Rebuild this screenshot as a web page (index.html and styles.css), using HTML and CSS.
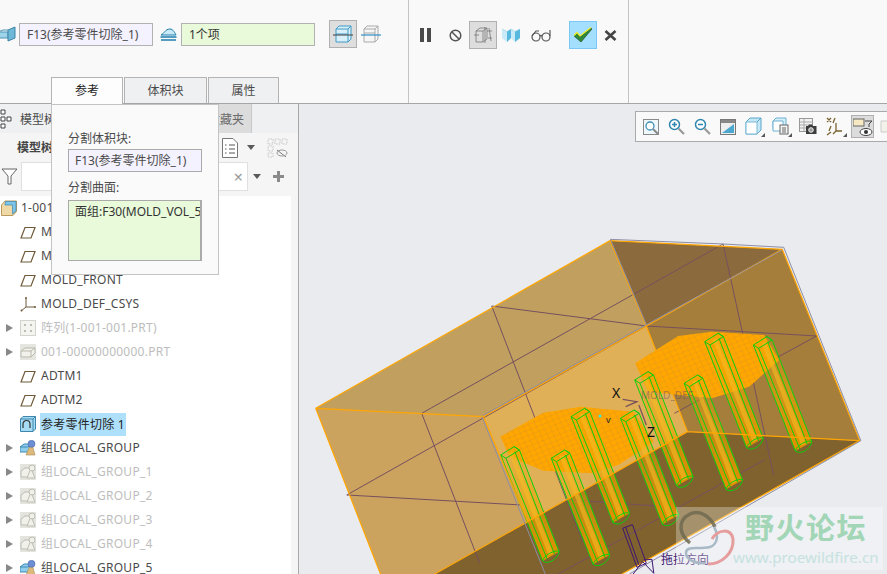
FILE: index.html
```html
<!DOCTYPE html>
<html lang="zh">
<head>
<meta charset="utf-8">
<title>Creo</title>
<link rel="stylesheet" href="styles.css">
</head>
<body>
<svg class="defs" width="0" height="0">
  <defs>
    <symbol id="i-plane" viewBox="0 0 16 16"><path d="M1 14 5 3.500H15L11 14Z" fill="none" stroke="#6f5a38" stroke-width="1.200"/></symbol>
    <symbol id="i-csys" viewBox="0 0 16 16"><path d="M6 2V11L1 15M6 11H15" fill="none" stroke="#6f5a38"/><circle cx="6" cy="2" r="1" fill="#6f5a38"/><circle cx="15" cy="11" r="1" fill="#6f5a38"/><circle cx="1.500" cy="14.500" r="1" fill="#6f5a38"/></symbol>
    <symbol id="i-pattern" viewBox="0 0 16 16"><rect width="16" height="16" fill="#e8e8e2"/><rect x=".5" y=".5" width="15" height="15" fill="#f4f4f0" stroke="#d4d4cc"/><path d="M4 4h2v2H4zM10 4h2v2h-2zM4 10h2v2H4zM10 10h2v2h-2z" fill="#bcbcb0"/></symbol>
    <symbol id="i-part" viewBox="0 0 16 16"><rect width="16" height="16" fill="#e6e6e0"/><path d="M1 7 5 4H15V9L11 13H1Z" fill="#f2f2ec" stroke="#b9b9ac"/><path d="M1 7H11L15 4M11 7V13" fill="none" stroke="#b9b9ac"/></symbol>
    <symbol id="i-group" viewBox="0 0 16 16"><path d="M0 7 4 4H12V12H0Z" fill="#8fcdec" stroke="#3f8ab4"/><path d="M0 7H8L12 4" fill="none" stroke="#3f8ab4"/><path d="M9 8 12 4 15 15H6Z" fill="#ddb97c" stroke="#a98a52" stroke-width=".6"/><circle cx="11.500" cy="3.800" r="3.500" fill="#6c8fd4" stroke="#3a5aa0" stroke-width=".5"/></symbol>
    <symbol id="i-groupoff" viewBox="0 0 16 16"><rect width="16" height="16" fill="#e4e4de"/><path d="M1 7 5 4H12V13H1Z" fill="#f1f1ec" stroke="#bdbdb2"/><path d="M7 14 11 4 15 14Z" fill="#f1f1ec" stroke="#bdbdb2"/><circle cx="12" cy="4" r="3" fill="#f1f1ec" stroke="#bdbdb2"/></symbol>
    <symbol id="i-cut" viewBox="0 0 16 16"><path d="M.500 3 3 .500H15.500V13L13 15.500H.500Z" fill="#a6dbf3" stroke="#3c86ad"/><path d="M13 15.500V3H.500M13 3 15.500.500" fill="none" stroke="#3c86ad"/><path d="M3 12V8A3.500 3.500 0 0 1 10 8V12" fill="none" stroke="#333" stroke-width="1.200"/></symbol>
    <symbol id="i-root" viewBox="0 0 16 16"><path d="M.500 5 4 1H15.500V11.500L12 15.500H.500Z" fill="#efd9a6" stroke="#b79a5c"/><path d="M4.500 1.500H15V11L11.500 14V5H4Z" fill="#7cc4ea" stroke="#3c86ad" stroke-width=".7"/></symbol>
    <linearGradient id="legfill" x1="0" y1="0" x2="0" y2="1">
      <stop offset="0" stop-color="#eba500" stop-opacity=".15"/>
      <stop offset=".45" stop-color="#eba500" stop-opacity=".55"/>
      <stop offset="1" stop-color="#e48f00" stop-opacity="1"/>
    </linearGradient>
    <pattern id="wire" width="16" height="15" patternUnits="userSpaceOnUse" patternTransform="rotate(-24)">
      <rect width="16" height="15" fill="#ffa600"/>
      <path d="M0 0H16M0 0V15" stroke="#cf8f2a" stroke-width="1.600" fill="none"/>
    </pattern>
    <g id="leg">
      <path class="leg-body" d="M-24 10 12-15 26-5 132 300 88 328Z"/>
      <path class="leg-core" d="M-2 4 8 0 116 305 104 312Z"/>
      <path class="leg-line" d="M-24 10 12-15 26-5-10 20ZM-24 10 88 328M-10 20 100 322M12-15 26-5M26-5 132 300M14 0 120 308"/>
      <path class="leg-line" d="M88 328C100 340 128 325 132 300M88 328C90 312 122 292 132 300"/>
    </g>
  </defs>
</svg>

<header class="ribbon">
  <section class="ribbon-main">
    <div class="ribbon-row">
      <svg class="ic-block" width="16" height="16" viewBox="0 0 16 16"><path d="M-2 6H8V12H-2Z" fill="#9ed4ea" stroke="#4c93b5"/><path d="M8 4 15 1V12L8 15Z" fill="#6fb8d8" stroke="#3d83a5"/><path d="M-2 6 3 4H8" fill="none" stroke="#4c93b5"/></svg>
      <div class="field field-ref">F13(参考零件切除_1)</div>
      <svg class="ic-surf" width="17" height="14" viewBox="0 0 17 14"><path d="M1 8C4 7 5 2 10 2 13 2 15 6 16 8Z" fill="#c9e9f6" stroke="#1e7fae"/><path d="M0.500 10H16.500M1 13H16" stroke="#1e7fae" stroke-width="1.300"/></svg>
      <div class="field field-sel">1个项</div>
      <button class="tool tool-on tool-a" type="button">
        <svg width="22" height="18" viewBox="0 0 22 18"><path d="M4 4 7 1H19V14L16 17H4Z" fill="#d9f0fa" stroke="#3e9ac6"/><path d="M4 4H16V17M16 4 19 1M4 9H16" fill="none" stroke="#3e9ac6"/><path d="M1 10H21" stroke="#555" stroke-width="1.200"/></svg>
      </button>
      <button class="tool tool-b" type="button">
        <svg width="22" height="18" viewBox="0 0 22 18"><path d="M4 4 7 1H18V14L15 17H4Z" fill="#f6f6f6" stroke="#aaa"/><path d="M4 4H15V17M15 4 18 1M4 8H15" fill="none" stroke="#aaa"/><path d="M1 10H21" stroke="#2e8fc4" stroke-width="1.200"/></svg>
      </button>
    </div>
    <nav class="tabs">
      <div class="tab tab-on">参考</div>
      <div class="tab tab-mid">体积块</div>
      <div class="tab tab-end">属性</div>
    </nav>
  </section>
  <section class="ribbon-actions">
    <div class="pause"><i></i><i></i></div>
    <svg class="ic-stop" width="13" height="13" viewBox="0 0 13 13"><circle cx="6.500" cy="6.500" r="5.300" fill="none" stroke="#555" stroke-width="1.500"/><path d="M3 3 10 10" stroke="#555" stroke-width="1.500"/></svg>
    <button class="tool tool-on tool-c" type="button">
      <svg width="20" height="18" viewBox="0 0 20 18"><path d="M3 5 7 2H14V13L10 16H3ZM3 5H10V16M10 5 14 2M1 9H6M12 1V17M16 2 18 15M14 5H19M15 12H19" fill="none" stroke="#777" stroke-width=".8"/></svg>
    </button>
    <svg class="ic-map" width="18" height="15" viewBox="0 0 18 15"><path d="M0 1 5 3.500 9 1 13 3.500 18 1V10L13 14 9 10 5 14 0 10Z" fill="#c9ebf8"/><path d="M5 3.500V14L9 10V1ZM13 3.500V14L18 10V1Z" fill="#58b8de"/><path d="M0 1 5 3.500 9 1 13 3.500 18 1" fill="none" stroke="#9ccfe2" stroke-width=".6"/></svg>
    <svg class="ic-glass" width="20" height="13" viewBox="0 0 20 13"><circle cx="5" cy="8" r="4" fill="none" stroke="#555" stroke-width="1.200"/><circle cx="15" cy="8" r="4" fill="none" stroke="#555" stroke-width="1.200"/><path d="M9 7Q10 6 11 7M1 7 5 2H8M19 7V1" fill="none" stroke="#555" stroke-width="1.200"/></svg>
    <button class="tool tool-ok" type="button">
      <svg width="22" height="18" viewBox="0 0 22 18"><path d="M2 10 5 7 8 11 19 2 20 3 9 16Z" fill="#2f8a3a" stroke="#173f1c" stroke-width=".6"/><path d="M2 9.500 5 6.500 8 10 19 1.500" fill="none" stroke="#f0f020" stroke-width="1.200"/></svg>
    </button>
    <svg class="ic-x" width="13" height="11" viewBox="0 0 13 11"><path d="M1.500 1 11.500 10M11.500 1 1.500 10" stroke="#444" stroke-width="2.600"/></svg>
  </section>
  <div class="ribbon-rest"></div>
</header>

<main class="body">
  <aside class="side">
    <div class="side-tabs">
      <div class="stab stab-tree">
        <svg width="12" height="24" viewBox="0 0 12 24"><path d="M1 3h4v4H1zM1 17h4v4H1zM7 10h4v4H7zM1 10h4v4H1z" fill="#fff" stroke="#444"/></svg>
        <span class="stab-label">模型树</span>
      </div>
      <div class="stab stab-fav"><span class="stab-label">收藏夹</span></div>
    </div>
    <div class="side-tools">
      <b class="side-title">模型树</b>
      <svg class="ic-list" width="16" height="20" viewBox="0 0 16 20"><path d="M.500.500H11L15.500 5V19.500H.500Z" fill="#fff" stroke="#777"/><path d="M3 7h1.500M3 11h1.500M3 15h1.500M7 7h6M7 11h6M7 15h6" stroke="#555"/></svg>
      <span class="caret caret-a"></span>
      <svg class="ic-hide" width="21" height="20" viewBox="0 0 21 20"><path d="M1 1h5v5H1zM8 1h5v5H8zM15 1h5v5h-5zM1 8h5v5H1zM1 15h5v4H1z" fill="none" stroke="#c6c6c6" stroke-dasharray="1.500 1"/><path d="M10 12 19 19" stroke="#777"/><ellipse cx="15" cy="15" rx="5" ry="3" fill="none" stroke="#999"/></svg>
    </div>
    <div class="side-filter">
      <svg class="ic-funnel" width="17" height="17" viewBox="0 0 17 17"><path d="M1 1H16L10 8V16H7V8Z" fill="#fff" stroke="#666"/></svg>
      <div class="filter-input"><span class="filter-x">×</span></div>
      <span class="caret caret-b"></span>
      <span class="plus"></span>
    </div>
    <ul class="tree">
      <li class="row row-root"><svg class="ti"><use href="#i-root"/></svg><span>1-001-001.ASM</span></li>
      <li class="row"><span class="arrow none"></span><svg class="ti"><use href="#i-plane"/></svg><span>MOLD_RIGHT</span></li>
      <li class="row"><span class="arrow none"></span><svg class="ti"><use href="#i-plane"/></svg><span>MAIN_PARTING</span></li>
      <li class="row"><span class="arrow none"></span><svg class="ti"><use href="#i-plane"/></svg><span>MOLD_FRONT</span></li>
      <li class="row"><span class="arrow none"></span><svg class="ti"><use href="#i-csys"/></svg><span>MOLD_DEF_CSYS</span></li>
      <li class="row off"><span class="arrow"></span><svg class="ti"><use href="#i-pattern"/></svg><span>阵列(1-001-001.PRT)</span></li>
      <li class="row off"><span class="arrow"></span><svg class="ti"><use href="#i-part"/></svg><span>001-00000000000.PRT</span></li>
      <li class="row"><span class="arrow none"></span><svg class="ti"><use href="#i-plane"/></svg><span>ADTM1</span></li>
      <li class="row"><span class="arrow none"></span><svg class="ti"><use href="#i-plane"/></svg><span>ADTM2</span></li>
      <li class="row"><span class="arrow none"></span><svg class="ti"><use href="#i-cut"/></svg><span class="sel">参考零件切除 1</span></li>
      <li class="row"><span class="arrow"></span><svg class="ti"><use href="#i-group"/></svg><span>组LOCAL_GROUP</span></li>
      <li class="row off"><span class="arrow"></span><svg class="ti"><use href="#i-groupoff"/></svg><span>组LOCAL_GROUP_1</span></li>
      <li class="row off"><span class="arrow"></span><svg class="ti"><use href="#i-groupoff"/></svg><span>组LOCAL_GROUP_2</span></li>
      <li class="row off"><span class="arrow"></span><svg class="ti"><use href="#i-groupoff"/></svg><span>组LOCAL_GROUP_3</span></li>
      <li class="row off"><span class="arrow"></span><svg class="ti"><use href="#i-groupoff"/></svg><span>组LOCAL_GROUP_4</span></li>
      <li class="row"><span class="arrow"></span><svg class="ti"><use href="#i-group"/></svg><span>组LOCAL_GROUP_5</span></li>
    </ul>
  </aside>

  <section class="canvas">
    <svg class="scene" viewBox="299 104 588 470" width="588" height="470">
      <g transform="translate(300 230) scale(.3744 .3333)">
        <path fill="#c1a05f" d="M42 535 828 32 925 288 490 560Z"/>
        <path fill="#cba35f" d="M42 535 490 560 608 875 360 1032H215Z"/>
        <path fill="#8b6b3d" d="M828 32 1288 58 925 288Z"/>
        <path fill="#a57e3c" d="M1288 58 1495 632 1035 605 925 288Z"/>
        <path fill="#e0b058" d="M490 560 925 288 1035 605 608 875Z"/>
        <path fill="#80622f" d="M608 875 1035 605 1495 632 860 1032H360Z"/>

        <path class="wf" d="M512 228 755 935M325 550 1130 42M125 795 925 288M325 550 480 1000M125 795 590 825M720 810 1005 832M1130 42 1265 735M1380 318 1000 550M1240 690 690 1032M512 228 925 288 1380 318"/>

        <path fill="url(#wire)" d="M535 620 650 548 750 530 890 545 945 635 850 705 780 730 650 722 560 680Z"/>
        <path fill="url(#wire)" d="M895 400 1010 318 1100 305 1240 315 1280 390 1200 470 1100 505 930 485Z"/>

        <use href="#leg" transform="translate(560 665)"/>
        <use href="#leg" transform="translate(695 675)"/>
        <use href="#leg" transform="translate(748 550)"/>
        <use href="#leg" transform="translate(880 555)"/>
        <use href="#leg" transform="translate(918 440)"/>
        <use href="#leg" transform="translate(1050 450)"/>
        <use href="#leg" transform="translate(1105 325)"/>
        <use href="#leg" transform="translate(1235 335)"/>

        <path class="edge-or" d="M42 535 828 32 1288 58 1495 632 860 1032M42 535 490 560 925 288 1288 58M42 535 215 1032M828 32 925 288 1035 605 1495 632M490 560 608 875M1035 605 360 1032"/>
        <path class="edge-gr" d="M828 28 1130 42 1292 52 1498 632 880 1032M490 556 925 284 1288 60M486 560 655 1032M830 30 925 284"/>
        <path class="edge-pu" d="M862 895 888 884 925 1000 900 1012ZM870 892 905 1005M890 1032 915 995 945 1030M918 990 940 988 945 1030"/>
        <path class="axis" d="M862 508 900 515 870 530M905 525 925 585"/>
      </g>
      <text class="ax" x="612" y="398">X</text>
      <text class="ax" x="647" y="437">Z</text>
      <text class="ax-v" x="606" y="423">v</text>
      <text class="ax-m" x="641" y="399">MOLD_DEF</text>
      <circle cx="600" cy="416" r="1.500" fill="#33e6e6"/>
      <text class="pull" x="661" y="564">拖拉方向</text>
    </svg>

    <div class="view-bar">
      <svg width="16" height="16" viewBox="0 0 16 16"><rect x=".5" y=".5" width="15" height="15" fill="#eef7fb" stroke="#8a8a8a"/><circle cx="7" cy="7" r="4" fill="#fff" stroke="#3e8fb7" stroke-width="1.300"/><path d="M10 10 15 15" stroke="#888" stroke-width="2"/></svg>
      <svg width="17" height="17" viewBox="0 0 17 17"><circle cx="6.500" cy="6.500" r="5" fill="#fff" stroke="#2f86ae" stroke-width="1.500"/><path d="M4 6.500H9M6.500 4V9" stroke="#2f86ae" stroke-width="1.500"/><path d="M10.500 10.500 16 16" stroke="#999" stroke-width="2.200"/></svg>
      <svg width="17" height="17" viewBox="0 0 17 17"><circle cx="6.500" cy="6.500" r="5" fill="#fff" stroke="#2f86ae" stroke-width="1.500"/><path d="M4 6.500H9" stroke="#2f86ae" stroke-width="1.500"/><path d="M10.500 10.500 16 16" stroke="#999" stroke-width="2.200"/></svg>
      <svg width="16" height="16" viewBox="0 0 16 16"><rect x=".5" y=".5" width="15" height="15" fill="#eee" stroke="#777"/><rect x="1" y="1" width="14" height="3" fill="#888"/><path d="M2 14 14 5V14Z" fill="#4da8cf"/></svg>
      <svg class="vb-wide" width="20" height="20" viewBox="0 0 20 20"><path d="M1 5 5 1H16V13L12 17H1Z" fill="#c6e8f6" stroke="#5aa6ca"/><path d="M1 5H12V17H1Z" fill="#fff" stroke="#7ab8d6"/><path d="M12 5 16 1" stroke="#5aa6ca"/><path d="M20 16V20H16Z" fill="#555"/></svg>
      <svg class="vb-wide" width="20" height="20" viewBox="0 0 20 20"><path d="M1 4 4 1H14V12H1Z" fill="#d5eef9" stroke="#6cb1d2"/><path d="M1 4H11V14H1Z" fill="#fff" stroke="#6cb1d2"/><rect x="8" y="8" width="8" height="9" fill="#f4f4f4" stroke="#666"/><path d="M10 11h4M10 13h4M10 15h4" stroke="#666"/><path d="M20 16V20H16Z" fill="#555"/></svg>
      <svg width="18" height="17" viewBox="0 0 18 17"><rect x=".5" y=".5" width="13" height="13" fill="#f2f2f2" stroke="#999"/><path d="M1 4H13M1 7H13M1 10H13M5 1V13" stroke="#aaa"/><path d="M7 8H9L10 6.500H13L14 8H17.500V16H7Z" fill="#3c3c3c"/><circle cx="12" cy="12" r="2.300" fill="#999" stroke="#eee"/></svg>
      <svg class="vb-wide" width="21" height="20" viewBox="0 0 21 20"><path d="M1 1 5 5M5 1 1 5M9 1 7 6M5 9 3 14M1 18 5 15M10 6V14H16M10 14 7 17" fill="none" stroke="#7a6230" stroke-width="1.300"/><path d="M21 16V20H17Z" fill="#555"/></svg>
      <span class="view-on"><svg width="20" height="18" viewBox="0 0 20 18"><rect x="0" y="1" width="11" height="7" fill="#f6e9c4" stroke="#666"/><path d="M12 3H19L16 6V9" fill="none" stroke="#444"/><ellipse cx="13" cy="14" rx="6" ry="3.500" fill="#fff" stroke="#444"/><circle cx="13" cy="14" r="2" fill="#333"/></svg></span>
      <svg class="view-cut" width="8" height="17" viewBox="0 0 8 17"><path d="M1 3H8V14H1Z" fill="#f2f2ea" stroke="#ccc"/></svg>
    </div>

    <div class="mark">
      <svg class="mark-logo" width="62" height="62" viewBox="0 0 62 62">
        <path d="M14 36C4 28 0 14 14 7 25 2 35 11 39 20" fill="none" stroke="#6f6a50" stroke-width="3.500" opacity=".85"/>
        <path d="M38 20C44 30 40 38 34 40 22 43 10 38 10 46 10 53 20 57 30 56" fill="none" stroke="#a9bac6" stroke-width="2.500"/>
        <path d="M36 32C42 22 55 21 57 32 58 46 46 57 32 57" fill="none" stroke="#e59d9d" stroke-width="3"/>
      </svg>
      <div class="mark-title">野火论坛</div>
      <div class="mark-url">www.proewildfire.cn</div>
    </div>
  </section>

  <div class="popup">
    <label class="pop-label">分割体积块:</label>
    <div class="pop-field">F13(参考零件切除_1)</div>
    <label class="pop-label pop-label-2">分割曲面:</label>
    <div class="pop-list">面组:F30(MOLD_VOL_5)</div>
  </div>
</main>
</body>
</html>
```

FILE: styles.css
```css
* { box-sizing: border-box; }
html, body { margin: 0; padding: 0; }
body {
  width: 887px;
  height: 574px;
  overflow: hidden;
  background: #e9ebef;
  color: #4a4a4a;
  font: 12px/16px "Noto Sans", "Noto Sans CJK SC", sans-serif;
}
.defs { position: absolute; }
button { padding: 0; margin: 0; font: inherit; background: none; border: 1px solid transparent; }

/* ribbon */
.ribbon {
  display: flex;
  height: 104px;
  background: #f9f9f9;
  border-bottom: 1px solid #a6a6a6;
}
.ribbon-main {
  width: 409px;
  flex: none;
  display: flex;
  flex-direction: column;
  justify-content: space-between;
  border-right: 1px solid #c4c4c4;
}
.ribbon-row {
  display: flex;
  align-items: center;
  height: 28px;
  margin-top: 20px;
}
.ic-block { margin: 0 3px 0 0; flex: none; }
.field {
  height: 23px;
  width: 134px;
  padding-left: 7px;
  line-height: 21px;
  border: 1px solid #b2b2b2;
  white-space: nowrap;
  overflow: hidden;
}
.field-ref { background: #f4f2fe; }
.field-sel { background: #e9fadb; color: #333; margin-left: 4px; }
.ic-surf { margin-left: 7px; flex: none; }
.tool { display: flex; align-items: center; justify-content: center; flex: none; width: 28px; height: 28px; }
.tool-on { background: #dedede; border-color: #b0b0b0; }
.tool-a { margin-left: 14px; }
.tool-b { margin-left: 0; }
.tabs { display: flex; padding-left: 51px; height: 26px; }
.tab {
  height: 26px;
  text-align: center;
  line-height: 25px;
  background: #eff0f2;
  border: 1px solid #b4b4b4;
  border-bottom: 0;
  margin-right: 1px;
}
.tab-on { width: 72px; background: #fdfdfd; color: #222; position: relative; z-index: 3; height: 27px; }
.tab-mid { width: 83px; }
.tab-end { width: 71px; }

.ribbon-actions {
  width: 220px;
  flex: none;
  display: flex;
  align-items: center;
  align-self: flex-start;
  height: 103px;
  padding: 21px 0 54px 11px;
  border-right: 1px solid #c4c4c4;
}
.pause { display: flex; gap: 3px; flex: none; }
.pause i { display: block; width: 4px; height: 14px; background: #4a4a4a; }
.ic-stop { margin-left: 18px; flex: none; }
.tool-c { margin-left: 7px; }
.ic-map { margin-left: 5px; flex: none; }
.ic-glass { margin-left: 11px; flex: none; }
.tool-ok { margin-left: 18px; background: #a5dfff; border-color: #7cc8f5; }
.ic-x { margin-left: 7px; flex: none; }
.ribbon-rest { flex: 1; }

/* main */
.body { display: flex; position: relative; height: 470px; }
.side {
  width: 299px;
  flex: none;
  display: flex;
  flex-direction: column;
  background: #f5f5f6;
  border-right: 1px solid #a8a8a8;
  overflow: hidden;
}
.side-tabs { display: flex; height: 29px; flex: none; background: #eff0f2; }
.stab { height: 29px; display: flex; align-items: center; }
.stab-label { padding-top: 2px; }
.stab-tree { width: 190px; gap: 8px; white-space: nowrap; }
.stab-fav {
  width: 62px;
  padding-left: 18px;
  background: #dcdcdc;
  border-right: 1px solid #c8c8c8;
  color: #6a6a6a;
  white-space: nowrap;
}
.side-tools { display: flex; align-items: center; height: 29px; flex: none; padding-left: 17px; }
.side-title { width: 205px; color: #444; font-weight: 700; }
.caret { display: block; flex: none; width: 0; height: 0; border: 4px solid transparent; border-top: 5px solid #5a5a5a; border-bottom: 0; }
.caret-a { margin-left: 9px; }
.ic-hide { margin-left: 12px; }
.side-filter { display: flex; align-items: center; height: 29px; flex: none; padding-left: 1px; }
.ic-funnel { flex: none; }
.filter-input {
  width: 227px;
  height: 29px;
  margin-left: 3px;
  background: #fff;
  border: 1px solid #e0e0e0;
  display: flex;
  align-items: center;
  justify-content: flex-end;
  padding-right: 4px;
}
.filter-x { color: #999; font-size: 16px; }
.caret-b { margin-left: 5px; }
.plus {
  display: block;
  width: 11px;
  height: 11px;
  margin-left: 12px;
  background:
    linear-gradient(#8a8a8a, #8a8a8a) center / 11px 3px no-repeat,
    linear-gradient(#8a8a8a, #8a8a8a) center / 3px 11px no-repeat;
}
.tree {
  list-style: none;
  margin: 5px 7px 0 0;
  padding: 0;
  background: #fff;
  flex: 1;
  overflow: hidden;
  letter-spacing: .25px;
}
.row {
  display: flex;
  align-items: center;
  height: 24px;
  padding-left: 6px;
  white-space: nowrap;
}
.row-root { padding-left: 1px; }
.row-root .ti { margin-right: 3px; }
.row.off { color: #bdbdbd; }
.arrow {
  flex: none;
  width: 0;
  height: 0;
  margin-right: 7px;
  border-style: solid;
  border-width: 4.500px 0 4.500px 7px;
  border-color: transparent transparent transparent #888;
}
.arrow.none { border-color: transparent; }
.ti { width: 16px; height: 16px; flex: none; margin-right: 4px; }
.row > span:last-child { padding: 0 1px; }
.sel { background: #aee0fb; color: #222; line-height: 23px; }

/* canvas */
.canvas { flex: 1; position: relative; overflow: hidden; background: #e9ebef; }
.scene { position: absolute; left: 0; top: 0; display: block; }
.wf, .edge-or, .edge-gr, .edge-pu, .axis { fill: none; vector-effect: non-scaling-stroke; }
.wf { stroke: #76505e; stroke-width: 1; }
.edge-or { stroke: #ffa500; stroke-width: 1.200; }
.edge-gr { stroke: #8d8ea6; stroke-width: 1; }
.edge-pu { stroke: #3d1670; stroke-width: 1; }
.axis { stroke: #76505e; stroke-width: 1.200; }
.leg-body { fill: url(#legfill); }
.leg-core { fill: #f5bd25; opacity: .6; }
.leg-line { fill: none; stroke: #0bcf0b; stroke-width: 1; vector-effect: non-scaling-stroke; }
.ax { font-size: 14px; fill: #111; }
.ax-v { font-size: 9px; fill: #222; }
.ax-m { font-size: 10px; fill: #76505e; opacity: .55; }
.pull { font-size: 12px; fill: #3d1670; }

.view-bar {
  position: absolute;
  left: 336px;
  top: 7px;
  width: 260px;
  height: 31px;
  display: flex;
  align-items: center;
  gap: 9px;
  padding-left: 7px;
  background: #f9f9f9;
  border: 1px solid #aaa;
  overflow: hidden;
}
.view-bar svg { flex: none; }
.vb-wide { margin-right: -2px; }
.view-on {
  flex: none;
  display: flex;
  align-items: center;
  justify-content: center;
  width: 23px;
  height: 23px;
  margin-left: -3px;
  margin-right: -3px;
  background: #dcdcdc;
  border: 1px solid #b0b0b0;
}

.mark {
  position: absolute;
  left: 377px;
  top: 403px;
  width: 207px;
  height: 63px;
  background: rgba(255, 255, 255, .3);
}
.mark-logo { position: absolute; left: 0; top: 0; }
.mark-title {
  position: absolute;
  left: 69px;
  top: 2px;
  font: 700 29px/34px "Noto Sans CJK SC", sans-serif;
  letter-spacing: 1.500px;
  color: #a2d6b6;
  white-space: nowrap;
}
.mark-url {
  position: absolute;
  left: 57px;
  top: 39px;
  font: 15.200px/22px "Noto Sans", sans-serif;
  color: #c6e2e0;
  white-space: nowrap;
}

/* popup */
.popup {
  position: absolute;
  left: 51px;
  top: 0;
  width: 168px;
  height: 171px;
  padding: 26px 16px 0;
  background: #fafafa;
  border: 1px solid #c4c4c4;
  z-index: 2;
}
.pop-label { display: block; height: 18px; line-height: 16px; }
.pop-label-2 { margin-top: 8px; height: 20px; }
.pop-field, .pop-list {
  width: 134px;
  padding-left: 6px;
  border: 1px solid #aaa;
  white-space: nowrap;
  overflow: hidden;
}
.pop-field { height: 23px; line-height: 21px; background: #f4f2fe; }
.pop-list { height: 61px; line-height: 22px; background: #e9fadb; color: #333; border-right-width: 2px; }
```
